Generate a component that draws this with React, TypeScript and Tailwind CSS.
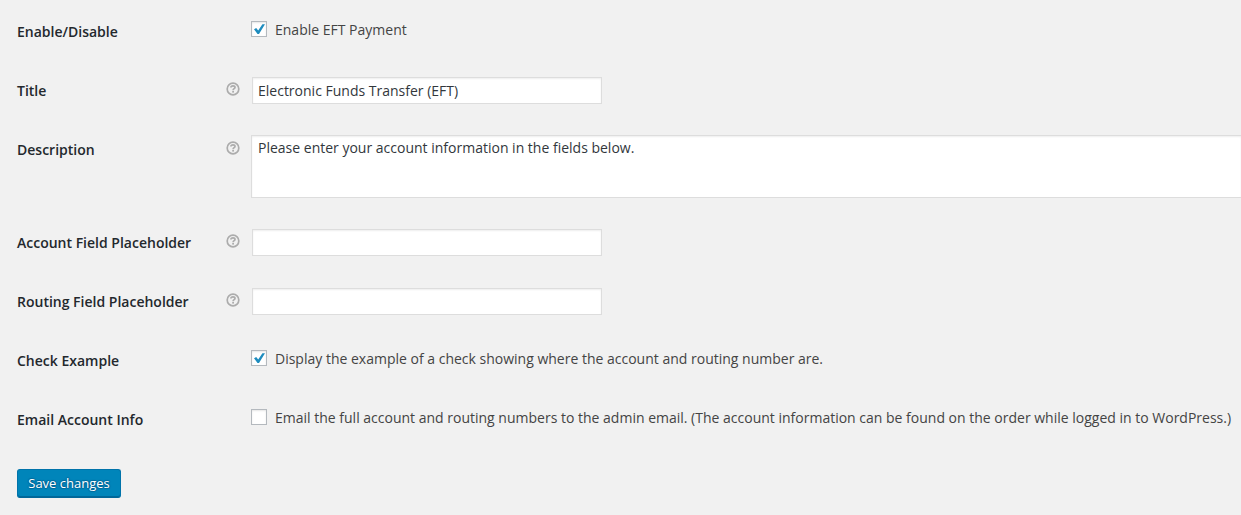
import { useState } from "react";
import type { ReactNode } from "react";

function HelpIcon() {
  return (
    <svg viewBox="0 0 14 14" className="h-3.5 w-3.5" fill="none" aria-hidden="true">
      <circle cx="7" cy="7" r="5.8" stroke="#acacac" strokeWidth="1.7" />
      <path
        d="M4.9 5.6C4.9 4.4 5.8 3.9 7 3.9s2 .5 2 1.5C9 6.7 7.1 6.7 7.1 8.2"
        stroke="#acacac"
        strokeWidth="1.7"
      />
      <rect x="6.2" y="9" width="1.8" height="1.6" fill="#acacac" />
    </svg>
  );
}

interface RowProps {
  title: string;
  htmlFor: string;
  help?: boolean;
  children: ReactNode;
}

function Row({ title, htmlFor, help = false, children }: RowProps) {
  return (
    <div className="grid grid-cols-[209px_25px_minmax(0,1fr)]">
      <label
        htmlFor={htmlFor}
        className="pt-5 text-sm leading-[19px] font-semibold text-[#23282d]"
      >
        {title}
      </label>
      <span className="pt-[21px]">{help && <HelpIcon />}</span>
      <div className="flex min-h-[59px] items-start py-[15px]">{children}</div>
    </div>
  );
}

interface TextProps {
  id: string;
  title: string;
  initial?: string;
}

function TextRow({ id, title, initial = "" }: TextProps) {
  return (
    <Row title={title} htmlFor={id} help>
      <input
        id={id}
        type="text"
        defaultValue={initial}
        className="m-px h-[27px] w-[350px] border border-[#ddd] bg-white px-[5px] text-sm text-[#32373c] shadow-[inset_0_1px_2px_rgba(0,0,0,0.07)] outline-none focus:border-[#5b9dd9]"
      />
    </Row>
  );
}

interface CheckProps {
  id: string;
  title: string;
  text: string;
  initial?: boolean;
}

function CheckRow({ id, title, text, initial = false }: CheckProps) {
  const [checked, setChecked] = useState(initial);
  return (
    <Row title={title} htmlFor={id}>
      <label className="flex items-start gap-2 text-sm leading-[26px] text-[#444]">
        <span className="mt-1 grid h-4 w-4 shrink-0">
          <input
            id={id}
            type="checkbox"
            checked={checked}
            onChange={(e) => setChecked(e.target.checked)}
            className="col-start-1 row-start-1 h-4 w-4 appearance-none border border-[#b4b9be] bg-white shadow-[inset_0_1px_2px_rgba(0,0,0,0.1)]"
          />
          {checked && (
            <svg
              viewBox="0 0 16 16"
              className="pointer-events-none col-start-1 row-start-1 h-4 w-4"
              aria-hidden="true"
            >
              <path d="M3 8.3 5.2 7.1 7.2 9.4 11.4 3.2 14 3.3 8 13H6.5Z" fill="#1e8cbe" />
            </svg>
          )}
        </span>
        {text}
      </label>
    </Row>
  );
}

export default function App() {
  return (
    <form
      onSubmit={(e) => e.preventDefault()}
      className="min-h-screen overflow-x-hidden bg-[#f1f1f1] pt-0.5 pl-[17px] font-['Open_Sans',sans-serif]"
    >
      <CheckRow id="enabled" title="Enable/Disable" text="Enable EFT Payment" initial />
      <TextRow id="title" title="Title" initial="Electronic Funds Transfer (EFT)" />
      <Row title="Description" htmlFor="description" help>
        <textarea
          id="description"
          defaultValue="Please enter your account information in the fields below."
          className="block h-[63px] w-full resize-none border border-r-0 border-[#ddd] bg-white px-1.5 py-0.5 text-sm text-[#32373c] shadow-[inset_0_1px_2px_rgba(0,0,0,0.07)] outline-none focus:border-[#5b9dd9]"
        />
      </Row>
      <TextRow id="account" title="Account Field Placeholder" />
      <TextRow id="routing" title="Routing Field Placeholder" />
      <CheckRow
        id="example"
        title="Check Example"
        text="Display the example of a check showing where the account and routing number are."
        initial
      />
      <CheckRow
        id="email"
        title="Email Account Info"
        text="Email the full account and routing numbers to the admin email. (The account information can be found on the order while logged in to WordPress.)"
      />
      <button
        type="submit"
        className="mt-5 mb-4 block h-[29px] min-w-[104px] cursor-pointer rounded-[3px] border border-[#0073aa] border-b-[#006799] bg-[#0085ba] px-2.5 pb-px text-[13px] leading-[26px] text-white shadow-[inset_0_-1px_0_#006799] [text-shadow:0_-1px_1px_#006799,1px_0_1px_#006799,0_1px_1px_#006799,-1px_0_1px_#006799]"
      >
        Save changes
      </button>
    </form>
  );
}
